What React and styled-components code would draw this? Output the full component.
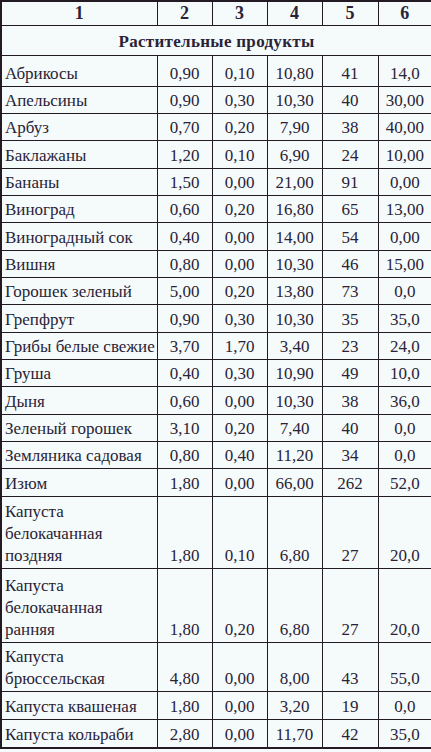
import React from 'react';
import styled, { createGlobalStyle } from 'styled-components';

const GlobalStyle = createGlobalStyle`
  html, body {
    margin: 0;
    padding: 0;
    background: #f5fbfb;
  }
`;

const Table = styled.table`
  width: 431px;
  table-layout: fixed;
  border-collapse: collapse;
  border: 2px solid #231a24;
  background: #f5fbfb;
  color: #2a2337;
  font-family: "Liberation Serif", Tinos, "Times New Roman", serif;
  font-size: 17px;
`;

const Row = styled.tr`
  height: ${(p) => p.$h}px;
`;

const HeadCell = styled.th`
  border: 1px solid #231a24;
  padding: 0;
  font-size: 18px;
  font-weight: bold;
  text-align: center;
  line-height: 22px;
`;

const SectionCell = styled.td`
  border: 1px solid #231a24;
  padding: 0 0 2px;
  font-weight: bold;
  text-align: center;
  vertical-align: bottom;
  line-height: 22px;
  letter-spacing: 0.3px;
`;

const NameCell = styled.td`
  border: 1px solid #231a24;
  padding: 0 2px 1px 3px;
  line-height: 22px;
  text-align: left;
  vertical-align: bottom;
  white-space: ${(p) => (p.$wrap ? 'normal' : 'nowrap')};
`;

const ValueCell = styled.td`
  border: 1px solid #231a24;
  padding: 0 0 1px;
  line-height: 22px;
  text-align: center;
  vertical-align: bottom;
  white-space: nowrap;
`;

const rows = [
  ['Абрикосы', '0,90', '0,10', '10,80', '41', '14,0', 31],
  ['Апельсины', '0,90', '0,30', '10,30', '40', '30,00'],
  ['Арбуз', '0,70', '0,20', '7,90', '38', '40,00'],
  ['Баклажаны', '1,20', '0,10', '6,90', '24', '10,00'],
  ['Бананы', '1,50', '0,00', '21,00', '91', '0,00'],
  ['Виноград', '0,60', '0,20', '16,80', '65', '13,00'],
  ['Виноградный сок', '0,40', '0,00', '14,00', '54', '0,00'],
  ['Вишня', '0,80', '0,00', '10,30', '46', '15,00'],
  ['Горошек зеленый', '5,00', '0,20', '13,80', '73', '0,0'],
  ['Грепфрут', '0,90', '0,30', '10,30', '35', '35,0'],
  ['Грибы белые свежие', '3,70', '1,70', '3,40', '23', '24,0'],
  ['Груша', '0,40', '0,30', '10,90', '49', '10,0'],
  ['Дыня', '0,60', '0,00', '10,30', '38', '36,0'],
  ['Зеленый горошек', '3,10', '0,20', '7,40', '40', '0,0'],
  ['Земляника садовая', '0,80', '0,40', '11,20', '34', '0,0'],
  ['Изюм', '1,80', '0,00', '66,00', '262', '52,0'],
  ['Капуста белокачанная поздняя', '1,80', '0,10', '6,80', '27', '20,0', 72, true],
  ['Капуста белокачанная ранняя', '1,80', '0,20', '6,80', '27', '20,0', 74, true],
  ['Капуста брюссельская', '4,80', '0,00', '8,00', '43', '55,0', 49, true],
  ['Капуста квашеная', '1,80', '0,00', '3,20', '19', '0,0', 28],
  ['Капуста кольраби', '2,80', '0,00', '11,70', '42', '35,0', 29],
];

const widths = [156, 55, 55, 55, 56, 54];

export default function App() {
  return (
    <>
      <GlobalStyle />
      <Table>
        <colgroup>
          {widths.map((w, i) => (
            <col key={i} style={{ width: w }} />
          ))}
        </colgroup>
        <thead>
          <Row $h={24}>
            {[1, 2, 3, 4, 5, 6].map((n) => (
              <HeadCell key={n}>{n}</HeadCell>
            ))}
          </Row>
        </thead>
        <tbody>
          <Row $h={30}>
            <SectionCell colSpan={6}>Растительные продукты</SectionCell>
          </Row>
          {rows.map(([name, a, b, c, d, e, h, wrap]) => (
            <Row key={name} $h={h || 27.35}>
              <NameCell $wrap={wrap}>{name}</NameCell>
              <ValueCell>{a}</ValueCell>
              <ValueCell>{b}</ValueCell>
              <ValueCell>{c}</ValueCell>
              <ValueCell>{d}</ValueCell>
              <ValueCell>{e}</ValueCell>
            </Row>
          ))}
        </tbody>
      </Table>
    </>
  );
}
